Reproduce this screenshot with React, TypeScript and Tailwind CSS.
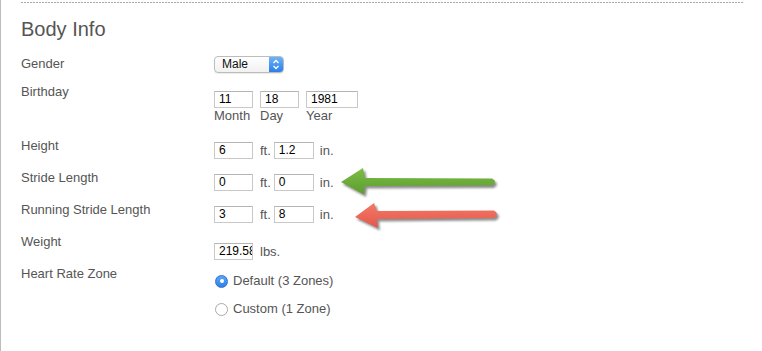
import React from 'react'

const labelCls = 'w-[193px] shrink-0 text-[13px] leading-4 text-[#555]'
const inputCls =
  'h-[17px] border border-[#c9c9c9] border-t-[#b5b5b5] bg-white pl-[4px] text-[12px] leading-[15px] text-black overflow-hidden whitespace-nowrap'

function Box({ value, width = 'w-[39px]' }: { value: string; width?: string }) {
  return <div className={`${inputCls} ${width}`}>{value}</div>
}

function Measure({ ft, inch }: { ft: string; inch: string }) {
  return (
    <div className="flex items-center">
      <Box value={ft} />
      <span className="ml-[7px] text-[13px] text-[#555]">ft.</span>
      <div className="ml-[3px]">
        <Box value={inch} width="w-[40px]" />
      </div>
      <span className="ml-[6px] text-[13px] text-[#555]">in.</span>
    </div>
  )
}

function Radio({ checked, label }: { checked?: boolean; label: string }) {
  return (
    <div className="flex items-center h-[16px]">
      {checked ? (
        <div className="w-[13px] h-[13px] rounded-full bg-gradient-to-b from-[#5aa6f5] to-[#2f7fe6] border border-[#2a72d4] flex items-center justify-center">
          <div className="w-[4px] h-[4px] rounded-full bg-white" />
        </div>
      ) : (
        <div className="w-[13px] h-[13px] rounded-full bg-white border border-[#aaa]" />
      )}
      <span className="ml-[5px] text-[13px] text-[#555]">{label}</span>
    </div>
  )
}

function Arrows() {
  return (
    <svg className="absolute left-0 top-0 pointer-events-none" width="762" height="351">
      <defs>
        <linearGradient id="gr" x1="0" y1="0" x2="0" y2="1">
          <stop offset="0" stopColor="#7cbd47" />
          <stop offset="1" stopColor="#5d9c2e" />
        </linearGradient>
        <linearGradient id="rd" x1="0" y1="0" x2="0" y2="1">
          <stop offset="0" stopColor="#f27a68" />
          <stop offset="1" stopColor="#e5574a" />
        </linearGradient>
        <filter id="sh" x="-10%" y="-50%" width="120%" height="200%">
          <feGaussianBlur stdDeviation="1.2" />
        </filter>
      </defs>
      {/* green */}
      <path
        d="M340 182 L362 168 L364 178 L491 178.5 Q497 181.5 491 185.5 L364 186 L363 194.5 Z"
        fill="#333"
        opacity="0.55"
        filter="url(#sh)"
        transform="translate(2 2.5)"
      />
      <path d="M340 182 L362 168 L364 178 L491 178.5 Q497 181.5 491 185.5 L364 186 L363 194.5 Z" fill="url(#gr)" />
      {/* red */}
      <path
        d="M354 217 L373 203 L376 211 L493 210.5 Q499 214 493 218 L376 219 L377 228 Z"
        fill="#333"
        opacity="0.55"
        filter="url(#sh)"
        transform="translate(2 2.5)"
      />
      <path d="M354 217 L373 203 L376 211 L493 210.5 Q499 214 493 218 L376 219 L377 228 Z" fill="url(#rd)" />
    </svg>
  )
}

export default function App() {
  return (
    <div className="relative w-[762px] h-[351px] bg-white border-l border-[#bdbdbd] overflow-hidden font-['Liberation_Sans',Arial,sans-serif]">
      <div className="pt-[2px] pl-[20px]">
        <div className="w-[722px] h-px bg-[repeating-linear-gradient(to_right,#a8a8a8_0,#a8a8a8_2px,transparent_2px,transparent_3px)]" />
      </div>

      <div className="pl-[20px] pt-[14px]">
        <h2 className="text-[20px] leading-6 text-[#555]">Body Info</h2>

        {/* Gender */}
        <div className="flex h-[28px] mt-[15px]">
          <div className={labelCls}>Gender</div>
          <div className="flex h-[17px] w-[70px] rounded-[4px] border border-[#bcbcbc] bg-gradient-to-b from-white to-[#f1f1f1] shadow-[0_1px_1px_rgba(0,0,0,0.08)] overflow-hidden">
            <span className="flex-1 pl-[7px] text-[12px] leading-[15px] text-[#111]">Male</span>
            <div className="w-[14px] bg-gradient-to-b from-[#6cb3fa] to-[#2a7de8] flex items-center justify-center">
              <svg width="8" height="11" viewBox="0 0 8 11">
                <path d="M1.5 4 L4 1.5 L6.5 4 M1.5 7 L4 9.5 L6.5 7" fill="none" stroke="white" strokeWidth="1.3" />
              </svg>
            </div>
          </div>
        </div>

        {/* Birthday */}
        <div className="flex h-[54px]">
          <div className={labelCls}>Birthday</div>
          <div className="flex gap-[7px] pt-[7px]">
            <div>
              <Box value="11" />
              <div className="text-[13px] leading-4 text-[#555]">Month</div>
            </div>
            <div>
              <Box value="18" />
              <div className="text-[13px] leading-4 text-[#555]">Day</div>
            </div>
            <div>
              <Box value="1981" width="w-[52px]" />
              <div className="text-[13px] leading-4 text-[#555]">Year</div>
            </div>
          </div>
        </div>

        <div className="flex h-[32px]">
          <div className={labelCls}>Height</div>
          <div className="pt-[3px]">
            <Measure ft="6" inch="1.2" />
          </div>
        </div>

        <div className="flex h-[32px]">
          <div className={labelCls}>Stride Length</div>
          <div className="pt-[3px]">
            <Measure ft="0" inch="0" />
          </div>
        </div>

        <div className="flex h-[32px]">
          <div className={labelCls}>Running Stride Length</div>
          <div className="pt-[3px]">
            <Measure ft="3" inch="8" />
          </div>
        </div>

        <div className="flex h-[32px]">
          <div className={labelCls}>Weight</div>
          <div className="pt-[3px] flex items-center">
            <Box value="219.58" />
            <span className="ml-[7px] text-[13px] text-[#555]">lbs.</span>
          </div>
        </div>

        <div className="flex">
          <div className={labelCls}>Heart Rate Zone</div>
          <div className="pt-[7px] flex flex-col gap-[12px] ml-[1px]">
            <Radio checked label="Default (3 Zones)" />
            <Radio label="Custom (1 Zone)" />
          </div>
        </div>
      </div>

      <Arrows />
    </div>
  )
}
